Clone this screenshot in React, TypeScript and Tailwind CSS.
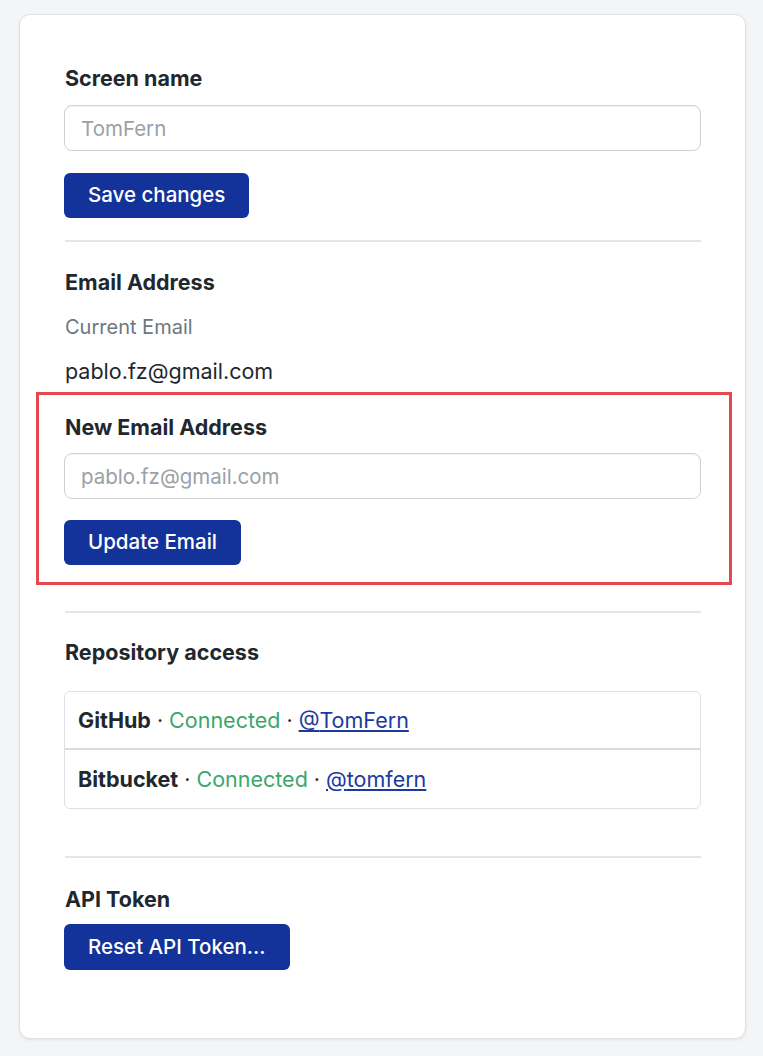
import type { ReactNode } from 'react'

const FONT = { fontFamily: 'Inter, "Noto Sans", sans-serif' }

function Label({ children, className = '' }: { children: ReactNode; className?: string }) {
  return <h3 className={`text-[21.5px] leading-7 font-bold text-[#1e282e] ${className}`}>{children}</h3>
}

function TextInput({ placeholder, className = '' }: { placeholder: string; className?: string }) {
  return (
    <input
      type="text"
      placeholder={placeholder}
      className={`block h-[46px] w-full rounded-lg border border-[#cdd1d5] bg-white px-4 text-[20.5px] text-[#1e282e] placeholder:text-[#9aa1a7] shadow-[inset_0_1px_1px_rgba(0,0,0,0.05)] outline-none ${className}`}
      style={FONT}
    />
  )
}

function PrimaryButton({ children, className = '' }: { children: ReactNode; className?: string }) {
  return (
    <button
      type="button"
      className={`block h-[45px] rounded-md bg-[#13339a] px-6 text-[20.5px] font-medium text-white ${className}`}
      style={FONT}
    >
      {children}
    </button>
  )
}

function Divider({ className = '' }: { className?: string }) {
  return <hr className={`border-0 border-t-2 border-[#e3e6e9] ${className}`} />
}

function RepoRow({ provider, handle, last = false }: { provider: string; handle: string; last?: boolean }) {
  return (
    <div
      className={`flex h-[58px] items-center px-[13px] text-[21.5px] text-[#1e282e] ${last ? '' : 'border-b-2 border-[#d7dbde]'}`}
    >
      <span className="font-bold">{provider}</span>
      <span className="mx-[6px]">·</span>
      <span className="text-[#3ba66c]">Connected</span>
      <span className="mx-[6px]">·</span>
      <a href="#" className="text-[#1b3a9e] underline underline-offset-2">
        @{handle}
      </a>
    </div>
  )
}

export default function App() {
  return (
    <div className="min-h-[1056px] bg-[#f4f5f7] pl-[19px] pr-[17px] pt-[14px] pb-[19px]" style={FONT}>
      <div className="rounded-[11px] border border-[#dfe2e5] bg-white px-[44px] pt-[49px] pb-[68px] shadow-[0_1px_3px_rgba(0,0,0,0.08)]">
        <section>
          <Label className="pl-px">Screen name</Label>
          <TextInput placeholder="TomFern" className="mt-[13px]" />
          <PrimaryButton className="mt-[22px]">Save changes</PrimaryButton>
        </section>

        <Divider className="mt-[22px] ml-px" />

        <section className="mt-[26px]">
          <div className="pl-px">
            <Label>Email Address</Label>
            <p className="mt-[17px] text-[20px] leading-7 text-[#6c777f]">Current Email</p>
            <p className="mt-[16px] text-[21.5px] leading-7 text-[#1e282e]">pablo.fz@gmail.com</p>
          </div>

          <div className="-mr-[31px] -ml-[28px] mt-[7px] border-[3px] border-[#e5484d] pl-[25px] pr-[28px] pt-[18px] pb-[17px]">
            <Label className="pl-px">New Email Address</Label>
            <TextInput placeholder="pablo.fz@gmail.com" className="mt-[12px]" />
            <PrimaryButton className="mt-[21px]">Update Email</PrimaryButton>
          </div>
        </section>

        <Divider className="mt-[26px] ml-px" />

        <section className="mt-[25px]">
          <Label className="pl-px">Repository access</Label>
          <div className="mt-[25px] overflow-hidden rounded-md border border-[#dde1e4]">
            <RepoRow provider="GitHub" handle="TomFern" />
            <RepoRow provider="Bitbucket" handle="tomfern" last />
          </div>
        </section>

        <Divider className="mt-[47px] ml-px" />

        <section className="mt-[27px]">
          <Label className="pl-px">API Token</Label>
          <PrimaryButton className="mt-[11px] h-[46px]">Reset API Token...</PrimaryButton>
        </section>
      </div>
    </div>
  )
}
